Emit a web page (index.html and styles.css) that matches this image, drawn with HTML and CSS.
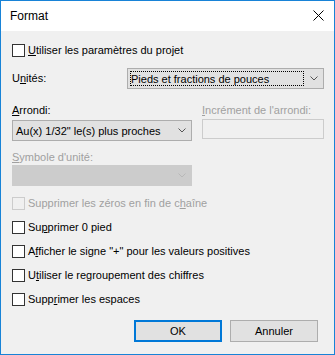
FILE: index.html
```
<!DOCTYPE html>
<html lang="fr">
<head>
    <meta charset="UTF-8">
    <title>Format</title>
    <link rel="stylesheet" href="styles.css">
</head>
<body>

<div class="dialog">
    <div class="titlebar">
        <span class="title">Format</span>
        <svg class="close" width="11" height="11" viewBox="0 0 11 11">
            <path d="M0.5 0.5 L10.5 10.5 M10.5 0.5 L0.5 10.5" stroke="#000" stroke-width="1" fill="none"/>
        </svg>
    </div>

    <div class="content">
        <label class="check first">
            <input type="checkbox">
            <span><u>U</u>tiliser les paramètres du projet</span>
        </label>

        <div class="units">
            <span class="label">U<u>n</u>ités:</span>
            <div class="combo wide focused">
                <span class="value">Pieds et fractions de pouces</span>
                <span class="arrow">
                    <svg width="8" height="5" viewBox="0 0 8 5"><path d="M0.5 0.5 L4 4 L7.5 0.5" fill="none" stroke="#555"/></svg>
                </span>
            </div>
        </div>

        <div class="pair labels">
            <span class="label col-left"><u>A</u>rrondi:</span>
            <span class="label disabled"><u>I</u>ncrément de l'arrondi:</span>
        </div>

        <div class="pair fields">
            <div class="combo narrow">
                <span class="value">Au(x) 1/32" le(s) plus proches</span>
                <span class="arrow">
                    <svg width="8" height="5" viewBox="0 0 8 5"><path d="M0.5 0.5 L4 4 L7.5 0.5" fill="none" stroke="#555"/></svg>
                </span>
            </div>
            <div class="edit"></div>
        </div>

        <span class="label disabled symbol"><u>S</u>ymbole d'unité:</span>
        <div class="combo narrow off">
            <span class="value"></span>
            <span class="arrow">
                <svg width="8" height="5" viewBox="0 0 8 5"><path d="M0.5 0.5 L4 4 L7.5 0.5" fill="none" stroke="#b8b8b8"/></svg>
            </span>
        </div>

        <label class="check disabled">
            <input type="checkbox" disabled>
            <span>Supprimer les zéros en fin de c<u>h</u>aîne</span>
        </label>
        <label class="check">
            <input type="checkbox">
            <span>Su<u>p</u>primer 0 pied</span>
        </label>
        <label class="check">
            <input type="checkbox">
            <span>A<u>f</u>ficher le signe "+" pour les valeurs positives</span>
        </label>
        <label class="check">
            <input type="checkbox">
            <span>U<u>t</u>iliser le regroupement des chiffres</span>
        </label>
        <label class="check">
            <input type="checkbox">
            <span>Supp<u>r</u>imer les espaces</span>
        </label>

        <div class="buttons">
            <button class="default">OK</button>
            <button>Annuler</button>
        </div>
    </div>
</div>

</body>
</html>
```

FILE: styles.css
```
body {
    margin: 0;
    font-family: "Liberation Sans", Arial, sans-serif;
    font-size: 11px;
    color: #000;
    background: #fff;
}
.dialog {
    width: 335px;
    height: 355px;
    box-sizing: border-box;
    border: 1px solid #1883d7;
    background: #f0f0f0;
}
.titlebar {
    height: 30px;
    background: #fff;
    display: flex;
    align-items: center;
    justify-content: space-between;
    padding: 0 10px 0 9px;
}
.title {
    font-size: 12px;
    line-height: 14px;
}
.close {
    margin-top: -1px;
}
.content {
    display: flex;
    flex-direction: column;
    align-items: flex-start;
    padding: 13px 10px 0 11px;
}
.label {
    line-height: 13px;
}
.disabled {
    color: #a0a0a0;
}

/* checkboxes */
.check {
    display: flex;
    align-items: center;
    gap: 3px;
    height: 13px;
    margin-top: 11px;
    line-height: 13px;
}
.check.first {
    margin-top: 0;
}
.check input {
    appearance: none;
    margin: 0;
    width: 13px;
    height: 13px;
    border: 1px solid #333;
    background: #fff;
}
.check input:disabled {
    border-color: #cccccc;
    background: #f0f0f0;
}

/* combo boxes */
.combo {
    display: flex;
    box-sizing: border-box;
    height: 21px;
    border: 1px solid #adadad;
    background: #e1e1e1;
}
.combo .value {
    flex: 1;
    display: flex;
    align-items: center;
    margin: 2px 0 2px 2px;
    border: 1px dotted transparent;
    white-space: nowrap;
}
.focused .value {
    border-color: #000;
}
.combo .arrow {
    width: 19px;
    display: flex;
    align-items: center;
    justify-content: center;
}
.combo.wide {
    width: 197px;
    margin-left: auto;
}
.combo.narrow {
    width: 180px;
}
.combo.off {
    background: #cccccc;
    border-color: #cccccc;
    margin-top: 1px;
}
.units {
    display: flex;
    align-items: center;
    align-self: stretch;
    margin-top: 11px;
}

/* arrondi / increment */
.pair {
    display: flex;
    gap: 10px;
    align-self: stretch;
}
.labels {
    margin-top: 15px;
}
.col-left {
    width: 180px;
}
.fields {
    margin-top: 2px;
    align-items: flex-start;
}
.fields .combo {
    margin-top: 1px;
}
.edit {
    width: 122px;
    height: 20px;
    box-sizing: border-box;
    border: 1px solid #cccccc;
    background: #f0f0f0;
}
.symbol {
    margin-top: 10px;
}

/* buttons */
.buttons {
    display: flex;
    justify-content: flex-end;
    gap: 8px;
    align-self: stretch;
    margin-top: 14px;
    padding-right: 6px;
}
button {
    width: 88px;
    height: 22px;
    padding: 0;
    font: inherit;
    color: #000;
    background: #e1e1e1;
    border: 1px solid #adadad;
}
button.default {
    border: 2px solid #0078d7;
}
```
